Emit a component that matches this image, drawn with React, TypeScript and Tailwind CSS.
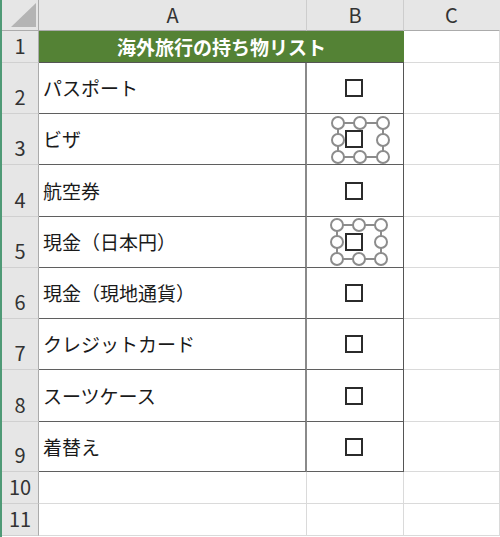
const jp = "font-['Noto_Sans_CJK_JP','Noto_Sans',sans-serif]";

type Row = { n: number; text: string; handles?: { x: number[]; y: number[] } };

const rows: Row[] = [
  { n: 2, text: 'パスポート' },
  { n: 3, text: 'ビザ', handles: { x: [31, 53, 76], y: [9, 26, 43] } },
  { n: 4, text: '航空券' },
  { n: 5, text: '現金（日本円）', handles: { x: [30, 52, 74], y: [8, 25, 42] } },
  { n: 6, text: '現金（現地通貨）' },
  { n: 7, text: 'クレジットカード' },
  { n: 8, text: 'スーツケース' },
  { n: 9, text: '着替え' },
];

function RowHead({ n }: { n: number }) {
  return (
    <div className="flex items-end justify-center bg-[#e6e6e6] border-r border-b border-r-[#ababab] border-b-[#d0d0d0] pb-[6px] text-[20px] leading-[20px] text-[#333]">
      {n}
    </div>
  );
}

function ColHead({ label, last }: { label: string; last?: boolean }) {
  return (
    <div
      className={`flex items-center justify-center bg-[#e6e6e6] border-b border-r border-b-[#ababab] text-[20px] leading-[20px] text-[#333] ${
        last ? 'border-r-[#e6e6e6]' : 'border-r-[#cdcdcd]'
      }`}
    >
      {label}
    </div>
  );
}

function Handles({ x, y }: { x: number[]; y: number[] }) {
  const pts: [number, number][] = [];
  y.forEach((yy, j) =>
    x.forEach((xx, i) => {
      if (i === 1 && j === 1) return;
      pts.push([xx, yy]);
    }),
  );
  return (
    <svg className="absolute inset-0 pointer-events-none" width="96" height="51">
      <rect x={x[0]} y={y[0]} width={x[2] - x[0]} height={y[2] - y[0]} fill="none" stroke="#8c8c8c" strokeWidth="2" />
      {pts.map(([cx, cy]) => (
        <circle key={`${cx}-${cy}`} cx={cx} cy={cy} r="6" fill="#fff" stroke="#8c8c8c" strokeWidth="2" />
      ))}
    </svg>
  );
}

function Checkbox() {
  return <div className="w-[18px] h-[18px] border-2 border-[#2b2b2b] bg-white" />;
}

export default function App() {
  return (
    <div className={`flex h-[537px] w-[500px] overflow-hidden bg-white ${jp}`}>
      <div className="w-[2px] shrink-0 bg-[#4f9a76]" />
      <div className="grid grid-cols-[37px_268px_97px_96px] grid-rows-[31px_32px_51px_51px_52px_51px_51px_51px_52px_50px_32px_32px] content-start">
        {/* column headers */}
        <div className="relative bg-[#e6e6e6] border-r border-b border-r-[#ababab] border-b-[#ababab]">
          <svg className="absolute inset-0" width="36" height="30">
            <polygon points="9,27 34,27 34,3" fill="#b4b4b4" />
          </svg>
        </div>
        <ColHead label="A" />
        <ColHead label="B" />
        <ColHead label="C" last />

        {/* title row */}
        <RowHead n={1} />
        <div className="col-span-2 flex items-center justify-center bg-[#548235] border-b border-b-[#555] text-white font-bold text-[19px] leading-[20px]">
          海外旅行の持ち物リスト
        </div>
        <div className="border-r border-b border-r-[#dadada] border-b-[#dadada]" />

        {rows.map((r) => (
          <div key={r.n} className="contents">
            <RowHead n={r.n} />
            <div className="flex items-center pl-[4px] border-r-2 border-b border-r-[#8a8a8a] border-b-[#5f5f5f] text-[19px] leading-[24px] text-[#1a1a1a]">
              {r.text}
            </div>
            <div className="relative flex items-center justify-center pr-[3px] border-r border-b border-r-[#555] border-b-[#5f5f5f]">
              <Checkbox />
              {r.handles && <Handles x={r.handles.x} y={r.handles.y} />}
            </div>
            <div className="border-r border-b border-r-[#dadada] border-b-[#dadada]" />
          </div>
        ))}

        {[10, 11].map((n) => (
          <div key={n} className="contents">
            <RowHead n={n} />
            <div className="border-r border-b border-r-[#dadada] border-b-[#dadada]" />
            <div className="border-r border-b border-r-[#dadada] border-b-[#dadada]" />
            <div className="border-r border-b border-r-[#dadada] border-b-[#dadada]" />
          </div>
        ))}
      </div>
    </div>
  );
}
